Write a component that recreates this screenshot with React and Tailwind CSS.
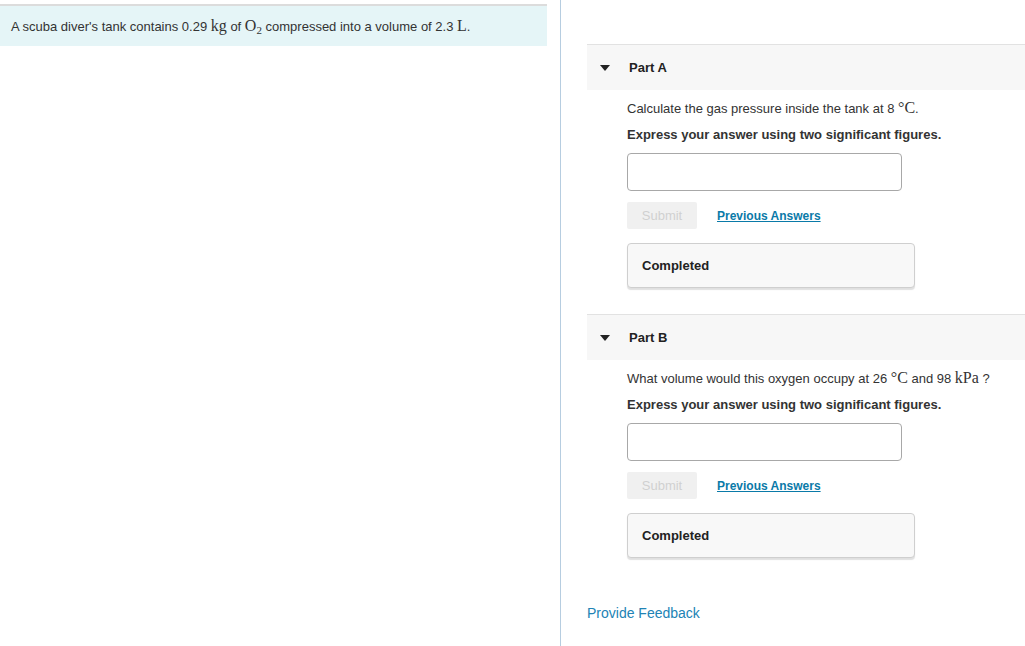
import { useState } from 'react'

const parts = [
  {
    id: 'A',
    question: (
      <>
        Calculate the gas pressure inside the tank at 8 <M>°C</M>.
      </>
    ),
  },
  {
    id: 'B',
    question: (
      <>
        What volume would this oxygen occupy at 26 <M>°C</M> and 98 <M>kPa</M> ?
      </>
    ),
  },
]

// math bits look like MathJax, so a serif face
function M({ children }) {
  return <span className="font-['Liberation_Serif',serif] text-[16px]">{children}</span>
}

function Part({ part }) {
  const [value, setValue] = useState('')

  return (
    <div className="mb-[26px]">
      {/* Header */}
      <div className="flex items-center h-[46px] bg-[#f7f7f7] border-t border-[#e2e2e2]">
        <svg width="10" height="6" viewBox="0 0 10 6" className="ml-[13px] mr-[19px]">
          <path d="M0 0 L10 0 L5 6 Z" fill="#222" />
        </svg>
        <span className="text-[13px] font-bold text-[#222]">Part {part.id}</span>
      </div>

      {/* Body */}
      <div className="pl-[40px] pt-[8px]">
        <p className="text-[13px] text-[#333] leading-[20px]">{part.question}</p>
        <p className="text-[13px] font-bold text-[#333] leading-[20px] mt-[6px]">
          Express your answer using two significant figures.
        </p>
        <input
          value={value}
          onChange={e => setValue(e.target.value)}
          className="block mt-[8px] w-[275px] h-[38px] border border-[#a8a8a8] rounded-[4px] outline-none px-2"
        />
        <div className="flex items-center mt-[11px]">
          <button className="w-[70px] h-[27px] bg-[#f0f0f0] rounded-[2px] text-[13px] text-[#d0d0d0]">
            Submit
          </button>
          <a href="#" className="ml-[20px] text-[12px] font-bold text-[#0a7aa8] underline">
            Previous Answers
          </a>
        </div>
        <div className="mt-[14px] w-[288px] h-[45px] flex items-center px-[14px] bg-[#f8f8f8] border border-[#cfcfcf] rounded-[4px] shadow-[0_2px_1px_rgba(0,0,0,0.12)]">
          <span className="text-[13px] font-bold text-[#222]">Completed</span>
        </div>
      </div>
    </div>
  )
}

export default function App() {
  return (
    <div className="flex w-[1025px] h-[646px] bg-white font-['Liberation_Sans',Arial,sans-serif] overflow-hidden">
      {/* Problem statement */}
      <div className="w-[561px] shrink-0 border-r border-[#b6cde0]">
        <div className="mt-[4px] w-[547px] h-[42px] bg-[#e5f5f7] border-t-2 border-[#dcdcdc] flex items-center pl-[11px]">
          <p className="text-[13px] text-[#333]">
            A scuba diver's tank contains 0.29 <M>kg</M> of <M>O<sub className="text-[11px]">2</sub></M> compressed into a volume of 2.3 <M>L</M>.
          </p>
        </div>
      </div>

      {/* Parts */}
      <div className="flex-1 pl-[26px] pt-[44px]">
        {parts.map(p => (
          <Part key={p.id} part={p} />
        ))}
        <a href="#" className="block mt-[45px] leading-[20px] text-[14px] text-[#2183b5]">
          Provide Feedback
        </a>
      </div>
    </div>
  )
}
